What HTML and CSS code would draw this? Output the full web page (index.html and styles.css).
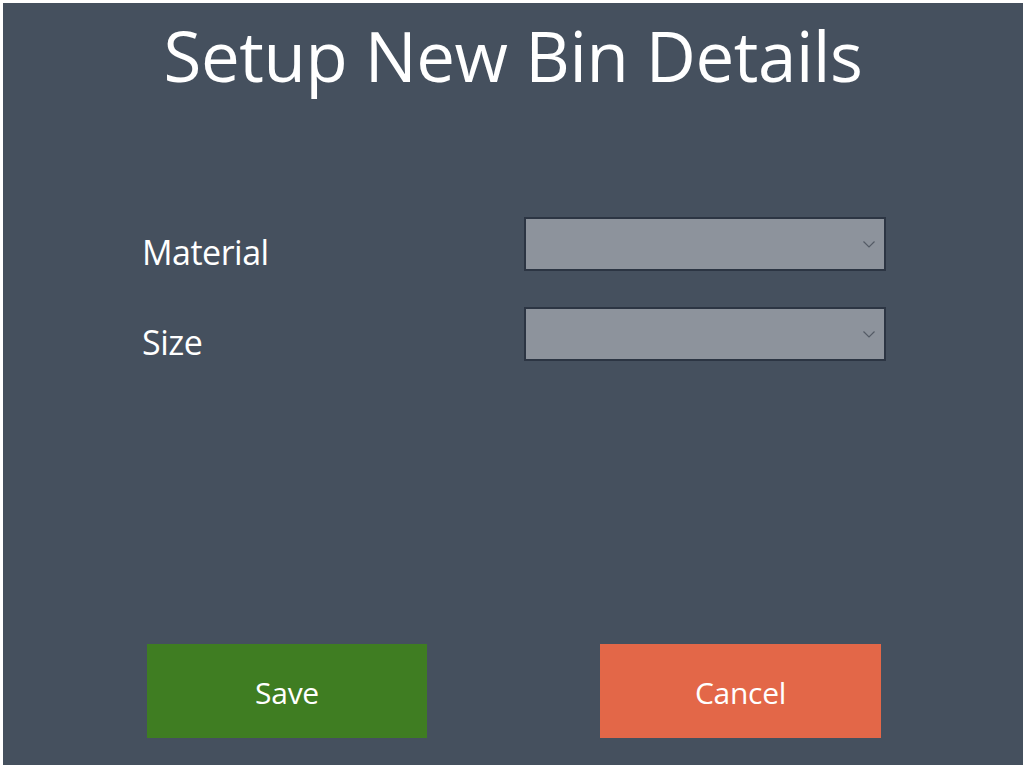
FILE: index.html
```html
<!DOCTYPE html>
<html>
<head>
<meta charset="utf-8">
<link rel="stylesheet" href="styles.css">
</head>
<body>
<div class="window">
  <h1 class="title">Setup New Bin Details</h1>
  <div class="form">
    <div class="row">
      <span class="label">Material</span>
      <div class="combo">
        <svg class="chev" width="12" height="7" viewBox="0 0 12 7"><path d="M0.5 0.5 L6 6 L11.5 0.5" fill="none" stroke="#545b66" stroke-width="1.2"/></svg>
      </div>
    </div>
    <div class="row">
      <span class="label">Size</span>
      <div class="combo">
        <svg class="chev" width="12" height="7" viewBox="0 0 12 7"><path d="M0.5 0.5 L6 6 L11.5 0.5" fill="none" stroke="#545b66" stroke-width="1.2"/></svg>
      </div>
    </div>
  </div>
  <div class="buttons">
    <button class="btn save">Save</button>
    <button class="btn cancel">Cancel</button>
  </div>
</div>
</body>
</html>
```
FILE: styles.css
```css
html, body {
  margin: 0;
  padding: 0;
  background: #ffffff;
}
body {
  font-family: "Open Sans", "Noto Sans", sans-serif;
  color: #ffffff;
}
.window {
  margin: 3px 6px 5px 3px;
  height: 762px;
  background: #45505e;
  display: flex;
  flex-direction: column;
  box-sizing: border-box;
}
.title {
  margin: 0;
  padding-top: 12px;
  font-size: 69px;
  font-weight: 400;
  line-height: 80px;
  text-align: center;
  letter-spacing: -0.4px;
}
.form {
  display: flex;
  flex-direction: column;
  gap: 36px;
  margin-top: 122px;
  padding-left: 139px;
}
.row {
  display: flex;
  align-items: center;
  height: 54px;
}
.label {
  width: 382px;
  font-size: 34px;
  letter-spacing: -0.5px;
  padding-top: 16px;
}
.combo {
  position: relative;
  width: 362px;
  height: 54px;
  box-sizing: border-box;
  background: #8d939c;
  border: 2px solid #2c3543;
}
.chev {
  position: absolute;
  right: 9px;
  top: 22px;
}
.buttons {
  margin-top: auto;
  margin-bottom: 27px;
  display: flex;
  padding-left: 144px;
  gap: 173px;
}
.btn {
  width: 280px;
  height: 94px;
  border: none;
  color: #ffffff;
  font-family: "Open Sans", "Noto Sans", sans-serif;
  font-size: 30px;
  padding: 3px 0 0 0;
  letter-spacing: -0.3px;
}
.save {
  background: #3f7d22;
}
.cancel {
  width: 281px;
  background: #e36748;
}
```
